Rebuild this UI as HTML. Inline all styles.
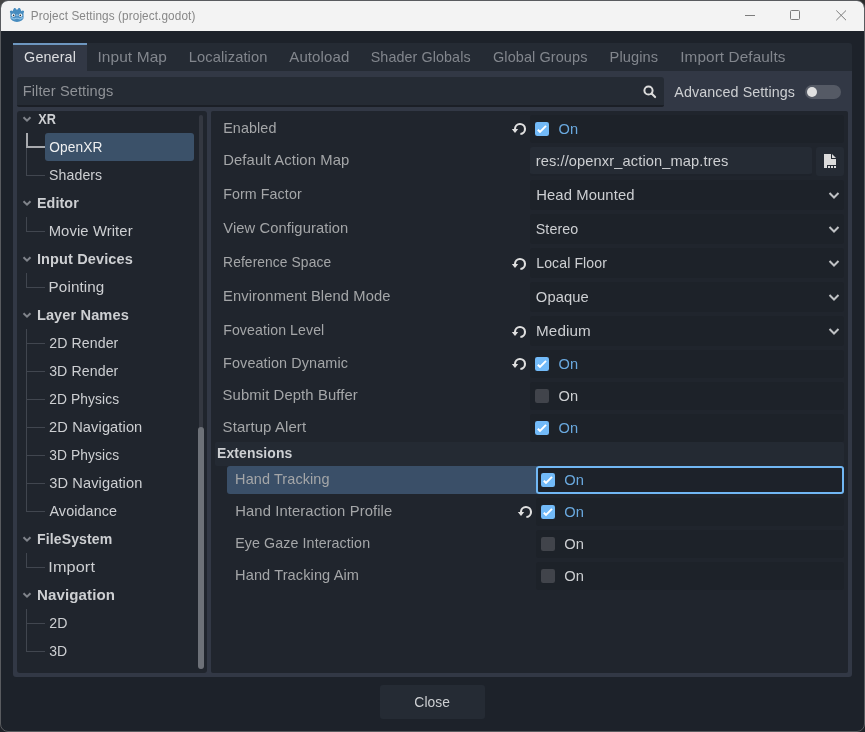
<!DOCTYPE html>
<html><head><meta charset="utf-8"><title>Project Settings</title>
<style>
html,body{margin:0;padding:0;}
body{width:865px;height:732px;overflow:hidden;background:#1f2228;position:relative;font-family:'Liberation Sans', sans-serif;}
.b{position:absolute;display:block}
.t{position:absolute;left:0;top:0;white-space:pre;line-height:20px;height:20px;transform-origin:0 50%}
#txt{position:absolute;left:0;top:0;width:865px;height:732px;will-change:transform}
</style></head><body>

<div class="b" style="left:0;top:0;width:10px;height:10px;background:#454545"></div><div class="b" style="left:855px;top:0;width:10px;height:10px;background:#2b2b2b"></div>
<div class="b" style="left:0;top:0;width:865px;height:732px;background:#1d222a;border-radius:8px;border:1px solid #595b5f;box-sizing:border-box"></div>
<div class="b" style="left:1px;top:1px;width:863px;height:30px;background:#f3f3f3;border-radius:7px 7px 0 0"></div>
<svg class="b" style="left:9px;top:7px" width="16" height="16" viewBox="9 7 16 16"><path d="M10 11 L11.5 10.6 L12.5 11.3 L13.7 8.7 L14.2 8 L15.4 8 L15.9 9 L16.3 9.4 L17.6 9.4 L18 9 L18.5 8 L19.7 8 L20.3 8.7 L21.4 11.3 L22.5 10.6 L24 11 L24 12.2 L23.5 13 L23.6 17.5 C23.8 19.7 20.5 21.9 17 21.9 C13.5 21.9 10.2 19.7 10.4 17.5 L10.4 13 L9.9 12.2 Z" fill="#478cbf"/><circle cx="13.4" cy="15.3" r="1.7" fill="#f4f8fb"/><circle cx="20.5" cy="15.3" r="1.7" fill="#f4f8fb"/><circle cx="13.6" cy="15.4" r="0.8" fill="#2b2f36"/><circle cx="20.3" cy="15.4" r="0.8" fill="#2b2f36"/><rect x="16.3" y="14.3" width="1.4" height="2" rx="0.5" fill="#8fc4ee"/><path d="M10.6 17.9 H12.9 V18.9 H15.3 V18.2 H18.7 V18.9 H21.1 V17.9 H23.4" fill="none" stroke="#a4d1f3" stroke-width="0.9"/></svg>
<div class="b" style="left:745px;top:15px;width:10px;height:1px;background:#7c7c7c"></div>
<div class="b" style="left:790px;top:10px;width:10px;height:10px;border:1px solid #7c7c7c;box-sizing:border-box;border-radius:1.5px"></div>
<svg class="b" style="left:836px;top:10px" width="11" height="11" viewBox="0 0 11 11"><path d="M0.3 0.5 L10 10.2 M10 0.5 L0.3 10.2" stroke="#7c7c7c" stroke-width="1"/></svg>

<div class="b" style="left:13px;top:43px;width:839px;height:28px;background:#252b34;border-radius:3px 3px 0 0"></div>
<div class="b" style="left:13px;top:71px;width:839px;height:606px;background:#323845;border-radius:0 0 3px 3px"></div>
<div class="b" style="left:13px;top:43px;width:74px;height:29px;background:#323845;border-top:2px solid #6e97c0;box-sizing:border-box"></div>
<div class="b" style="left:17px;top:77px;width:647px;height:30px;background:#252b34;border-radius:3px 3px 2px 2px;border-bottom:2px solid #1b1f26;box-sizing:border-box"></div>
<div class="b" style="left:805px;top:85px;width:36px;height:14px;background:#555a65;border-radius:7px"></div>
<div class="b" style="left:807px;top:87px;width:10px;height:10px;background:#e0e0e0;border-radius:5px"></div>
<div class="b" style="left:17px;top:111px;width:189.5px;height:562px;background:#20252d;border-radius:3px"></div>
<div class="b" style="left:211px;top:111px;width:637px;height:562px;background:#20252d;border-radius:2px"></div>
<div class="b" style="left:45px;top:133px;width:149px;height:28px;background:#3b5169;border-radius:3px"></div>
<div class="b" style="left:199px;top:115px;width:4px;height:554px;background:#343841;border-radius:2px"></div>
<div class="b" style="left:198px;top:427px;width:6px;height:242px;background:#6d7178;border-radius:3px"></div>
<div class="b" style="left:26px;top:133px;width:1px;height:42px;background:#41464f;"></div>
<div class="b" style="left:26px;top:147px;width:19px;height:1px;background:#41464f;"></div>
<div class="b" style="left:26px;top:175px;width:19px;height:1px;background:#41464f;"></div>
<div class="b" style="left:26px;top:217px;width:1px;height:14px;background:#41464f;"></div>
<div class="b" style="left:26px;top:231px;width:19px;height:1px;background:#41464f;"></div>
<div class="b" style="left:26px;top:273px;width:1px;height:14px;background:#41464f;"></div>
<div class="b" style="left:26px;top:287px;width:19px;height:1px;background:#41464f;"></div>
<div class="b" style="left:26px;top:329px;width:1px;height:182px;background:#41464f;"></div>
<div class="b" style="left:26px;top:343px;width:19px;height:1px;background:#41464f;"></div>
<div class="b" style="left:26px;top:371px;width:19px;height:1px;background:#41464f;"></div>
<div class="b" style="left:26px;top:399px;width:19px;height:1px;background:#41464f;"></div>
<div class="b" style="left:26px;top:427px;width:19px;height:1px;background:#41464f;"></div>
<div class="b" style="left:26px;top:455px;width:19px;height:1px;background:#41464f;"></div>
<div class="b" style="left:26px;top:483px;width:19px;height:1px;background:#41464f;"></div>
<div class="b" style="left:26px;top:511px;width:19px;height:1px;background:#41464f;"></div>
<div class="b" style="left:26px;top:553px;width:1px;height:14px;background:#41464f;"></div>
<div class="b" style="left:26px;top:567px;width:19px;height:1px;background:#41464f;"></div>
<div class="b" style="left:26px;top:609px;width:1px;height:42px;background:#41464f;"></div>
<div class="b" style="left:26px;top:623px;width:19px;height:1px;background:#41464f;"></div>
<div class="b" style="left:26px;top:651px;width:19px;height:1px;background:#41464f;"></div>
<div class="b" style="left:26px;top:133px;width:2px;height:14.5px;background:#a8aaae;"></div>
<div class="b" style="left:26px;top:145.5px;width:19px;height:2px;background:#a8aaae;"></div>
<div class="b" style="left:530px;top:115px;width:314px;height:28px;background:#1d2229;border-radius:3px"></div>
<div class="b" style="left:530px;top:147px;width:282px;height:29px;background:#252b34;border-radius:3px;border-bottom:2px solid #1e232b;box-sizing:border-box"></div>
<div class="b" style="left:816px;top:147px;width:28px;height:29px;background:#252b34;border-radius:3px"></div>
<div class="b" style="left:530px;top:180px;width:314px;height:30px;background:#1d2229;border-radius:3px"></div>
<div class="b" style="left:530px;top:214px;width:314px;height:30px;background:#1d2229;border-radius:3px"></div>
<div class="b" style="left:530px;top:248px;width:314px;height:30px;background:#1d2229;border-radius:3px"></div>
<div class="b" style="left:530px;top:282px;width:314px;height:30px;background:#1d2229;border-radius:3px"></div>
<div class="b" style="left:530px;top:316px;width:314px;height:30px;background:#1d2229;border-radius:3px"></div>
<div class="b" style="left:530px;top:350px;width:314px;height:28px;background:#1d2229;border-radius:3px"></div>
<div class="b" style="left:530px;top:382px;width:314px;height:28px;background:#1d2229;border-radius:3px"></div>
<div class="b" style="left:530px;top:414px;width:314px;height:28px;background:#1d2229;border-radius:3px"></div>
<div class="b" style="left:215px;top:442px;width:629px;height:24px;background:#242a33;border-radius:2px"></div>
<div class="b" style="left:227px;top:466px;width:310px;height:28px;background:#3a4f68;border-radius:3px 0 0 3px"></div>
<div class="b" style="left:536px;top:465.6px;width:308px;height:28.8px;background:#1d222a;border:2px solid #71b7f4;box-sizing:border-box;border-radius:3px"></div>
<div class="b" style="left:536px;top:498px;width:308px;height:28px;background:#1d2229;border-radius:3px"></div>
<div class="b" style="left:536px;top:530px;width:308px;height:28px;background:#1d2229;border-radius:3px"></div>
<div class="b" style="left:536px;top:562px;width:308px;height:28px;background:#1d2229;border-radius:3px"></div>
<div class="b" style="left:380px;top:685px;width:105px;height:34px;background:#252b34;border-radius:3px"></div>
<svg class="b" style="left:535px;top:122px" width="14" height="14" viewBox="0 0 14 14"><rect width="14" height="14" rx="2.2" fill="#72baf8"/><path d="M2.8 7.7 L5 9.9 L11 3.9" fill="none" stroke="#fff" stroke-width="2"/></svg>
<svg class="b" style="left:535px;top:357px" width="14" height="14" viewBox="0 0 14 14"><rect width="14" height="14" rx="2.2" fill="#72baf8"/><path d="M2.8 7.7 L5 9.9 L11 3.9" fill="none" stroke="#fff" stroke-width="2"/></svg>
<div class="b" style="left:535px;top:389px;width:14px;height:14px;background:#41444b;border-radius:2.2px"></div>
<svg class="b" style="left:535px;top:421px" width="14" height="14" viewBox="0 0 14 14"><rect width="14" height="14" rx="2.2" fill="#72baf8"/><path d="M2.8 7.7 L5 9.9 L11 3.9" fill="none" stroke="#fff" stroke-width="2"/></svg>
<svg class="b" style="left:541px;top:473px" width="14" height="14" viewBox="0 0 14 14"><rect width="14" height="14" rx="2.2" fill="#72baf8"/><path d="M2.8 7.7 L5 9.9 L11 3.9" fill="none" stroke="#fff" stroke-width="2"/></svg>
<svg class="b" style="left:541px;top:505px" width="14" height="14" viewBox="0 0 14 14"><rect width="14" height="14" rx="2.2" fill="#72baf8"/><path d="M2.8 7.7 L5 9.9 L11 3.9" fill="none" stroke="#fff" stroke-width="2"/></svg>
<div class="b" style="left:541px;top:537px;width:14px;height:14px;background:#41444b;border-radius:2.2px"></div>
<div class="b" style="left:541px;top:569px;width:14px;height:14px;background:#41444b;border-radius:2.2px"></div>
<svg class="b" style="left:511px;top:121px" width="16" height="16" viewBox="0 0 16 16"><path d="M4 8 A5 5 0 1 1 9.4 13" fill="none" stroke="#e0e0e0" stroke-width="2.1"/><path d="M0.8 8 L7.2 8 L4 12 Z" fill="#e0e0e0"/></svg>
<svg class="b" style="left:511px;top:255.7px" width="16" height="16" viewBox="0 0 16 16"><path d="M4 8 A5 5 0 1 1 9.4 13" fill="none" stroke="#e0e0e0" stroke-width="2.1"/><path d="M0.8 8 L7.2 8 L4 12 Z" fill="#e0e0e0"/></svg>
<svg class="b" style="left:511px;top:323.8px" width="16" height="16" viewBox="0 0 16 16"><path d="M4 8 A5 5 0 1 1 9.4 13" fill="none" stroke="#e0e0e0" stroke-width="2.1"/><path d="M0.8 8 L7.2 8 L4 12 Z" fill="#e0e0e0"/></svg>
<svg class="b" style="left:511px;top:356.2px" width="16" height="16" viewBox="0 0 16 16"><path d="M4 8 A5 5 0 1 1 9.4 13" fill="none" stroke="#e0e0e0" stroke-width="2.1"/><path d="M0.8 8 L7.2 8 L4 12 Z" fill="#e0e0e0"/></svg>
<svg class="b" style="left:517px;top:504.4px" width="16" height="16" viewBox="0 0 16 16"><path d="M4 8 A5 5 0 1 1 9.4 13" fill="none" stroke="#e0e0e0" stroke-width="2.1"/><path d="M0.8 8 L7.2 8 L4 12 Z" fill="#e0e0e0"/></svg>
<svg class="b" style="left:826px;top:187px" width="16" height="16" viewBox="0 0 16 16"><path d="M3.5 6 L8 10.5 L12.5 6" fill="none" stroke="#bfc1c4" stroke-width="2"/></svg>
<svg class="b" style="left:826px;top:221px" width="16" height="16" viewBox="0 0 16 16"><path d="M3.5 6 L8 10.5 L12.5 6" fill="none" stroke="#bfc1c4" stroke-width="2"/></svg>
<svg class="b" style="left:826px;top:255px" width="16" height="16" viewBox="0 0 16 16"><path d="M3.5 6 L8 10.5 L12.5 6" fill="none" stroke="#bfc1c4" stroke-width="2"/></svg>
<svg class="b" style="left:826px;top:289px" width="16" height="16" viewBox="0 0 16 16"><path d="M3.5 6 L8 10.5 L12.5 6" fill="none" stroke="#bfc1c4" stroke-width="2"/></svg>
<svg class="b" style="left:826px;top:323px" width="16" height="16" viewBox="0 0 16 16"><path d="M3.5 6 L8 10.5 L12.5 6" fill="none" stroke="#bfc1c4" stroke-width="2"/></svg>
<svg class="b" style="left:19px;top:111px" width="16" height="16" viewBox="0 0 16 16"><path d="M4.5 6.2 L8 9.7 L11.5 6.2" fill="none" stroke="#80848b" stroke-width="2"/></svg>
<svg class="b" style="left:19px;top:195px" width="16" height="16" viewBox="0 0 16 16"><path d="M4.5 6.2 L8 9.7 L11.5 6.2" fill="none" stroke="#80848b" stroke-width="2"/></svg>
<svg class="b" style="left:19px;top:251px" width="16" height="16" viewBox="0 0 16 16"><path d="M4.5 6.2 L8 9.7 L11.5 6.2" fill="none" stroke="#80848b" stroke-width="2"/></svg>
<svg class="b" style="left:19px;top:307px" width="16" height="16" viewBox="0 0 16 16"><path d="M4.5 6.2 L8 9.7 L11.5 6.2" fill="none" stroke="#80848b" stroke-width="2"/></svg>
<svg class="b" style="left:19px;top:531px" width="16" height="16" viewBox="0 0 16 16"><path d="M4.5 6.2 L8 9.7 L11.5 6.2" fill="none" stroke="#80848b" stroke-width="2"/></svg>
<svg class="b" style="left:19px;top:587px" width="16" height="16" viewBox="0 0 16 16"><path d="M4.5 6.2 L8 9.7 L11.5 6.2" fill="none" stroke="#80848b" stroke-width="2"/></svg>
<svg class="b" style="left:641.5px;top:83.5px" width="16" height="16" viewBox="0 0 16 16"><circle cx="6.5" cy="6.5" r="4.1" fill="none" stroke="#dcdcdc" stroke-width="2"/><path d="M9.6 9.6 L13.1 13.1" stroke="#dcdcdc" stroke-width="2.1" stroke-linecap="round"/></svg>
<svg class="b" style="left:822px;top:153px" width="16" height="16" viewBox="0 0 16 16"><path d="M2 1 v14 h3 v-3 h9 V6 H9 V1 Z M10 1 v4 h4 Z M6 13 h2 v2 H6 Z M9 13 h2 v2 H9 Z M12 13 h2 v2 h-2 Z" fill="#dcdcdc"/></svg>
<div id="txt">
<div class="t" style="color:#878787;font-weight:normal;font-size:12px;letter-spacing:0.10px;transform:translate(30.73px,5.70px) scaleX(0.9806)">Project Settings (project.godot)</div>
<div class="t" style="color:#dcdde0;font-weight:normal;font-size:14.5px;letter-spacing:0.10px;transform:translate(24.11px,47.00px) scaleX(0.9916)">General</div>
<div class="t" style="color:#82868d;font-weight:normal;font-size:14.5px;letter-spacing:0.10px;transform:translate(97.39px,47.00px) scaleX(1.0651)">Input Map</div>
<div class="t" style="color:#82868d;font-weight:normal;font-size:14.5px;letter-spacing:0.10px;transform:translate(188.75px,47.00px) scaleX(1.0126)">Localization</div>
<div class="t" style="color:#82868d;font-weight:normal;font-size:14.5px;letter-spacing:0.10px;transform:translate(289.27px,47.00px) scaleX(1.0352)">Autoload</div>
<div class="t" style="color:#82868d;font-weight:normal;font-size:14.5px;letter-spacing:0.10px;transform:translate(370.71px,47.00px) scaleX(0.9862)">Shader Globals</div>
<div class="t" style="color:#82868d;font-weight:normal;font-size:14.5px;letter-spacing:0.10px;transform:translate(492.98px,47.00px) scaleX(0.9966)">Global Groups</div>
<div class="t" style="color:#82868d;font-weight:normal;font-size:14.5px;letter-spacing:0.10px;transform:translate(609.60px,47.00px) scaleX(1.0077)">Plugins</div>
<div class="t" style="color:#82868d;font-weight:normal;font-size:14.5px;letter-spacing:0.10px;transform:translate(680.21px,47.00px) scaleX(1.0547)">Import Defaults</div>
<div class="t" style="color:#8f9297;font-weight:normal;font-size:14.5px;letter-spacing:0.10px;transform:translate(22.77px,81.00px) scaleX(1.0052)">Filter Settings</div>
<div class="t" style="color:#cdcfd2;font-weight:normal;font-size:14.5px;letter-spacing:0.10px;transform:translate(674.32px,82.00px) scaleX(0.9842)">Advanced Settings</div>
<div class="t" style="color:#cdcfd2;font-weight:bold;font-size:14.5px;letter-spacing:0.10px;transform:translate(38.14px,109.00px) scaleX(0.8768)">XR</div>
<div class="t" style="color:#eeeff0;font-weight:normal;font-size:14.5px;letter-spacing:0.10px;transform:translate(49.25px,137.00px) scaleX(0.9466)">OpenXR</div>
<div class="t" style="color:#cdcfd2;font-weight:normal;font-size:14.5px;letter-spacing:0.10px;transform:translate(49.07px,165.00px) scaleX(0.9723)">Shaders</div>
<div class="t" style="color:#cdcfd2;font-weight:bold;font-size:14.5px;letter-spacing:0.10px;transform:translate(36.96px,193.00px) scaleX(0.9860)">Editor</div>
<div class="t" style="color:#cdcfd2;font-weight:normal;font-size:14.5px;letter-spacing:0.10px;transform:translate(48.69px,221.00px) scaleX(1.0206)">Movie Writer</div>
<div class="t" style="color:#cdcfd2;font-weight:bold;font-size:14.5px;letter-spacing:0.10px;transform:translate(36.97px,249.00px) scaleX(1.0031)">Input Devices</div>
<div class="t" style="color:#cdcfd2;font-weight:normal;font-size:14.5px;letter-spacing:0.10px;transform:translate(48.56px,277.00px) scaleX(1.0499)">Pointing</div>
<div class="t" style="color:#cdcfd2;font-weight:bold;font-size:14.5px;letter-spacing:0.10px;transform:translate(36.89px,305.00px) scaleX(1.0066)">Layer Names</div>
<div class="t" style="color:#cdcfd2;font-weight:normal;font-size:14.5px;letter-spacing:0.10px;transform:translate(49.19px,333.00px) scaleX(0.9749)">2D Render</div>
<div class="t" style="color:#cdcfd2;font-weight:normal;font-size:14.5px;letter-spacing:0.10px;transform:translate(49.15px,361.00px) scaleX(0.9754)">3D Render</div>
<div class="t" style="color:#cdcfd2;font-weight:normal;font-size:14.5px;letter-spacing:0.10px;transform:translate(49.25px,389.00px) scaleX(0.9512)">2D Physics</div>
<div class="t" style="color:#cdcfd2;font-weight:normal;font-size:14.5px;letter-spacing:0.10px;transform:translate(49.11px,417.00px) scaleX(1.0095)">2D Navigation</div>
<div class="t" style="color:#cdcfd2;font-weight:normal;font-size:14.5px;letter-spacing:0.10px;transform:translate(49.20px,445.00px) scaleX(0.9516)">3D Physics</div>
<div class="t" style="color:#cdcfd2;font-weight:normal;font-size:14.5px;letter-spacing:0.10px;transform:translate(49.30px,473.00px) scaleX(1.0073)">3D Navigation</div>
<div class="t" style="color:#cdcfd2;font-weight:normal;font-size:14.5px;letter-spacing:0.10px;transform:translate(49.43px,501.00px) scaleX(0.9909)">Avoidance</div>
<div class="t" style="color:#cdcfd2;font-weight:bold;font-size:14.5px;letter-spacing:0.10px;transform:translate(37.02px,529.00px) scaleX(0.9710)">FileSystem</div>
<div class="t" style="color:#cdcfd2;font-weight:normal;font-size:14.5px;letter-spacing:0.10px;transform:translate(48.35px,557.00px) scaleX(1.1190)">Import</div>
<div class="t" style="color:#cdcfd2;font-weight:bold;font-size:14.5px;letter-spacing:0.10px;transform:translate(37.02px,585.00px) scaleX(1.0399)">Navigation</div>
<div class="t" style="color:#cdcfd2;font-weight:normal;font-size:14.5px;letter-spacing:0.10px;transform:translate(49.22px,613.00px) scaleX(0.9756)">2D</div>
<div class="t" style="color:#cdcfd2;font-weight:normal;font-size:14.5px;letter-spacing:0.10px;transform:translate(49.17px,641.00px) scaleX(0.9644)">3D</div>
<div class="t" style="color:#a4a6a8;font-weight:normal;font-size:14.5px;letter-spacing:0.10px;transform:translate(223.14px,118.00px) scaleX(0.9890)">Enabled</div>
<div class="t" style="color:#a4a6a8;font-weight:normal;font-size:14.5px;letter-spacing:0.10px;transform:translate(223.19px,150.00px) scaleX(1.0218)">Default Action Map</div>
<div class="t" style="color:#a4a6a8;font-weight:normal;font-size:14.5px;letter-spacing:0.10px;transform:translate(223.15px,184.00px) scaleX(0.9818)">Form Factor</div>
<div class="t" style="color:#a4a6a8;font-weight:normal;font-size:14.5px;letter-spacing:0.10px;transform:translate(223.24px,218.00px) scaleX(1.0151)">View Configuration</div>
<div class="t" style="color:#a4a6a8;font-weight:normal;font-size:14.5px;letter-spacing:0.10px;transform:translate(223.11px,252.00px) scaleX(0.9517)">Reference Space</div>
<div class="t" style="color:#a4a6a8;font-weight:normal;font-size:14.5px;letter-spacing:0.10px;transform:translate(223.02px,286.00px) scaleX(1.0149)">Environment Blend Mode</div>
<div class="t" style="color:#a4a6a8;font-weight:normal;font-size:14.5px;letter-spacing:0.10px;transform:translate(223.18px,320.00px) scaleX(0.9740)">Foveation Level</div>
<div class="t" style="color:#a4a6a8;font-weight:normal;font-size:14.5px;letter-spacing:0.10px;transform:translate(223.11px,353.00px) scaleX(0.9927)">Foveation Dynamic</div>
<div class="t" style="color:#a4a6a8;font-weight:normal;font-size:14.5px;letter-spacing:0.10px;transform:translate(222.61px,385.00px) scaleX(1.0227)">Submit Depth Buffer</div>
<div class="t" style="color:#a4a6a8;font-weight:normal;font-size:14.5px;letter-spacing:0.10px;transform:translate(222.59px,417.00px) scaleX(1.0309)">Startup Alert</div>
<div class="t" style="color:#a4a6a8;font-weight:normal;font-size:14.5px;letter-spacing:0.10px;transform:translate(235.10px,469.00px) scaleX(0.9974)">Hand Tracking</div>
<div class="t" style="color:#a4a6a8;font-weight:normal;font-size:14.5px;letter-spacing:0.10px;transform:translate(235.19px,501.00px) scaleX(1.0209)">Hand Interaction Profile</div>
<div class="t" style="color:#a4a6a8;font-weight:normal;font-size:14.5px;letter-spacing:0.10px;transform:translate(235.15px,533.00px) scaleX(0.9826)">Eye Gaze Interaction</div>
<div class="t" style="color:#a4a6a8;font-weight:normal;font-size:14.5px;letter-spacing:0.10px;transform:translate(235.07px,565.00px) scaleX(1.0048)">Hand Tracking Aim</div>
<div class="t" style="color:#cdcfd2;font-weight:bold;font-size:14.5px;letter-spacing:0.10px;transform:translate(217.04px,443.00px) scaleX(0.9620)">Extensions</div>
<div class="t" style="color:#cdcfd2;font-weight:normal;font-size:14.5px;letter-spacing:0.10px;transform:translate(535.65px,151.00px) scaleX(1.0110)">res://openxr_action_map.tres</div>
<div class="t" style="color:#cdcfd2;font-weight:normal;font-size:14.5px;letter-spacing:0.10px;transform:translate(536.19px,185.00px) scaleX(1.0213)">Head Mounted</div>
<div class="t" style="color:#cdcfd2;font-weight:normal;font-size:14.5px;letter-spacing:0.10px;transform:translate(535.71px,219.00px) scaleX(0.9851)">Stereo</div>
<div class="t" style="color:#cdcfd2;font-weight:normal;font-size:14.5px;letter-spacing:0.10px;transform:translate(536.20px,253.00px) scaleX(0.9718)">Local Floor</div>
<div class="t" style="color:#cdcfd2;font-weight:normal;font-size:14.5px;letter-spacing:0.10px;transform:translate(535.85px,287.00px) scaleX(1.0157)">Opaque</div>
<div class="t" style="color:#cdcfd2;font-weight:normal;font-size:14.5px;letter-spacing:0.10px;transform:translate(536.08px,321.00px) scaleX(1.0497)">Medium</div>
<div class="t" style="color:#6aa9df;font-weight:normal;font-size:14.5px;letter-spacing:0.10px;transform:translate(558.51px,119.00px) scaleX(1.0070)">On</div>
<div class="t" style="color:#6aa9df;font-weight:normal;font-size:14.5px;letter-spacing:0.10px;transform:translate(558.51px,354.00px) scaleX(1.0070)">On</div>
<div class="t" style="color:#cdcfd2;font-weight:normal;font-size:14.5px;letter-spacing:0.10px;transform:translate(558.51px,386.00px) scaleX(1.0070)">On</div>
<div class="t" style="color:#6aa9df;font-weight:normal;font-size:14.5px;letter-spacing:0.10px;transform:translate(558.51px,418.00px) scaleX(1.0070)">On</div>
<div class="t" style="color:#6aa9df;font-weight:normal;font-size:14.5px;letter-spacing:0.10px;transform:translate(564.24px,470.00px) scaleX(1.0145)">On</div>
<div class="t" style="color:#6aa9df;font-weight:normal;font-size:14.5px;letter-spacing:0.10px;transform:translate(564.24px,502.00px) scaleX(1.0145)">On</div>
<div class="t" style="color:#cdcfd2;font-weight:normal;font-size:14.5px;letter-spacing:0.10px;transform:translate(564.24px,534.00px) scaleX(1.0145)">On</div>
<div class="t" style="color:#cdcfd2;font-weight:normal;font-size:14.5px;letter-spacing:0.10px;transform:translate(564.24px,566.00px) scaleX(1.0145)">On</div>
<div class="t" style="color:#cdcfd2;font-weight:normal;font-size:14.5px;letter-spacing:0.10px;transform:translate(414.32px,692.00px) scaleX(0.9534)">Close</div>
</div>
</body></html>
